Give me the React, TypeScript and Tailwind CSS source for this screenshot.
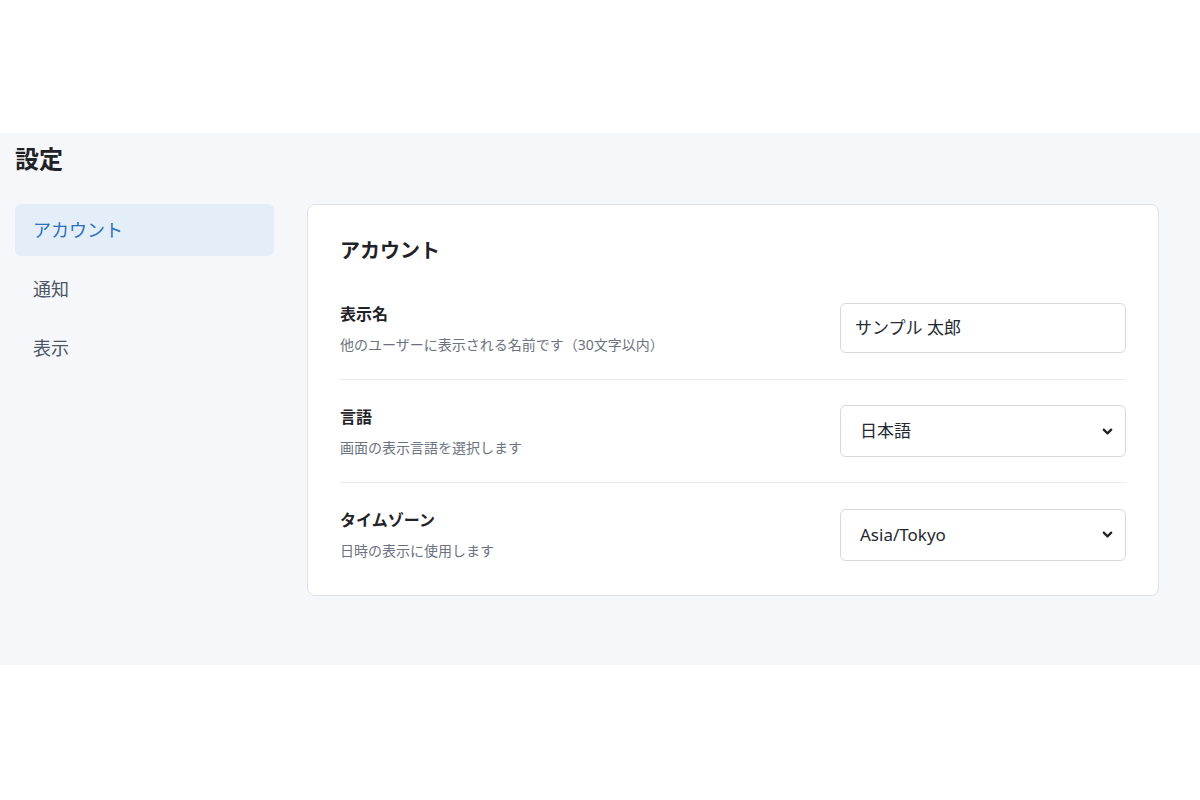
import { ChevronDown } from 'lucide-react';

const NAV = ['アカウント', '通知', '表示'];

function Row({ label, desc, children, last }: { label: string; desc: string; children: React.ReactNode; last?: boolean }) {
  return (
    <div className={`flex items-center justify-between h-[103px] ${last ? '' : 'border-b border-[#e8ebef]'}`}>
      <div>
        <div className="text-[16px] font-bold text-[#1f2328] leading-[24px]">{label}</div>
        <div className="text-[14px] text-[#6b7280] leading-[20px] mt-[9px]">{desc}</div>
      </div>
      {children}
    </div>
  );
}

function Select({ value }: { value: string }) {
  return (
    <div className="w-[286px] h-[52px] border border-[#d5d9de] rounded-[6px] bg-white flex items-center justify-between pl-[19px] pr-[10px] text-[17px] text-[#24292f]">
      <span>{value}</span>
      <ChevronDown size={15} strokeWidth={3.5} className="text-[#222]" />
    </div>
  );
}

export default function App() {
  return (
    <div className="bg-white min-h-[800px] pt-[133px]" style={{ fontFamily: '"Noto Sans", "Noto Sans CJK JP", sans-serif' }}>
      <div className="bg-[#f5f7fa] h-[532px] px-[15px] pt-[8px]">
        <h1 className="text-[24px] font-bold text-[#1f2328] leading-[36px]">設定</h1>
        <div className="flex gap-[33px] mt-[27px]">
          <nav className="w-[259px] flex flex-col gap-[7px]">
            {NAV.map((n, i) => (
              <div
                key={n}
                className={`h-[52px] flex items-center px-[18px] rounded-[6px] text-[18px] ${i === 0 ? 'bg-[#e3eef9] text-[#2f6fb8]' : 'text-[#4b5563]'}`}
              >
                {n}
              </div>
            ))}
          </nav>
          <div className="w-[852px] h-[392px] bg-white border border-[#dfe3e8] rounded-[8px] px-[32px] pt-[31px]">
            <h2 className="text-[20px] font-bold text-[#1f2328] leading-[30px]">アカウント</h2>
            <div className="mt-[11px]">
              <Row label="表示名" desc="他のユーザーに表示される名前です（30文字以内）">
                <div className="w-[286px] h-[50px] border border-[#d5d9de] rounded-[6px] bg-white flex items-center px-[14px] text-[17px] text-[#24292f]">
                  サンプル 太郎
                </div>
              </Row>
              <Row label="言語" desc="画面の表示言語を選択します">
                <Select value="日本語" />
              </Row>
              <Row label="タイムゾーン" desc="日時の表示に使用します" last>
                <Select value="Asia/Tokyo" />
              </Row>
            </div>
          </div>
        </div>
      </div>
    </div>
  );
}
